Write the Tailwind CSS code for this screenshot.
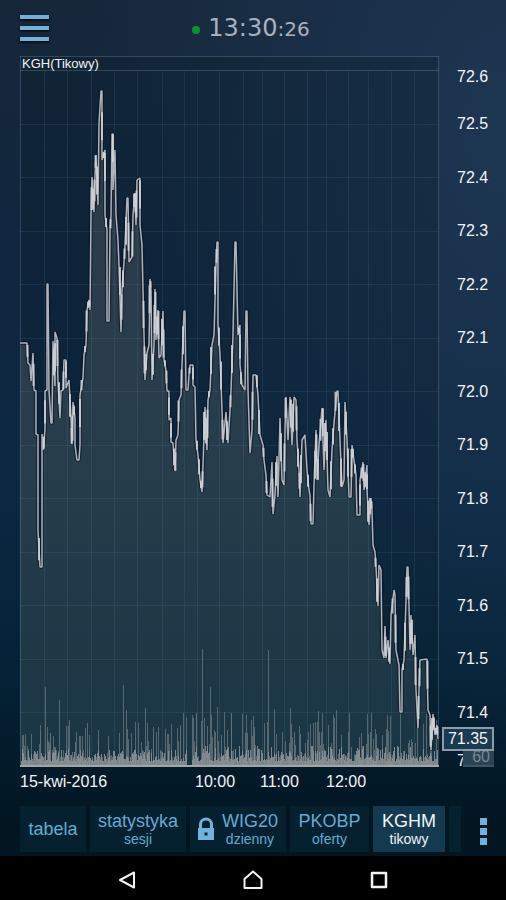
<!DOCTYPE html>
<html lang="pl">
<head>
    <meta charset="UTF-8">
    <meta name="viewport" content="width=device-width, initial-scale=1.0">
    <title>KGHM - tikowy</title>
    <script src="https://cdn.jsdelivr.net/npm/@tailwindcss/browser@4"></script>
</head>
<body class="flex min-h-screen flex-col bg-[#02192a] bg-[radial-gradient(ellipse_at_100%_15%,#1d3652_0%,transparent_60%),linear-gradient(to_bottom,#16273a_0%,#10263f_30%,#0b2843_55%,#042236_75%,#021521_92%)] font-['Liberation_Sans',Arial,sans-serif] text-gray-100">

    <!-- Header -->
    <header class="relative flex h-14 items-center justify-center">
        <button type="button" aria-label="Menu" class="absolute left-5 top-[15px] flex h-[26px] w-[29px] flex-col justify-between">
            <span class="h-1 w-full bg-[#6db3dc] shadow-sm shadow-black"></span>
            <span class="h-1 w-full bg-[#6db3dc] shadow-sm shadow-black"></span>
            <span class="h-1 w-full bg-[#6db3dc] shadow-sm shadow-black"></span>
        </button>
        <span class="mr-2 mt-1 size-2 rounded-full bg-[#07942f]"></span>
        <time class="mr-1 font-['DejaVu_Sans',sans-serif] text-2xl text-[#a9b1bf]">13:30<span class="text-xl">:26</span></time>
    </header>

    <!-- Chart -->
    <main class="flex flex-1 pl-5">
        <section class="relative min-w-0 flex-1">
            <h1 class="absolute left-[2px] top-0 z-10 text-[13px] leading-4 text-gray-100">KGH(Tikowy)</h1>
            <svg class="absolute inset-0 h-full w-full" viewBox="20 56 419 711" preserveAspectRatio="none" fill="none">
                <defs>
                    <linearGradient id="areaFill" x1="0" y1="90" x2="0" y2="767" gradientUnits="userSpaceOnUse">
                        <stop offset="0" stop-color="#2e3b4a"/>
                        <stop offset="0.55" stop-color="#273d4c"/>
                        <stop offset="1" stop-color="#193543"/>
                    </linearGradient>
                </defs>
                <rect x="20" y="56" width="419" height="711" fill="#0a1f2c" fill-opacity="0.3"/>
                <path id="area" fill="url(#areaFill)"/>
                <path id="grid" stroke="#7fa5b5" stroke-opacity="0.12"/>
                <path d="M20.500 56V767M438.500 56V767M20 56.500H439M20 70.500H439" stroke="#83a0b0" stroke-opacity="0.3"/>
                <path id="volumeBack" stroke="#66747b" stroke-opacity="0.8"/>
                <path id="volume" stroke="#8e9497" stroke-opacity="0.85"/>
                <path d="M20 766H439" stroke="#a3a5a8" stroke-width="2"/>
                <path id="lineShadow" stroke="#040c1e" stroke-opacity="0.5" stroke-width="4" stroke-linejoin="bevel"/>
                <path id="line" stroke="#b0b2ba" stroke-width="1.500" stroke-linejoin="bevel"/>
                <path id="ticks" stroke="#d2d3d7" stroke-opacity="0.85" stroke-width="2"/>
            </svg>
        </section>

        <!-- Price axis -->
        <aside class="relative w-[67px] text-base leading-5">
            <span class="absolute left-[18px] top-[11px]">72.6</span>
            <div class="flex h-full flex-col justify-between pb-11 pl-[18px] pt-[58px]">
                <span>72.5</span>
                <span>72.4</span>
                <span>72.3</span>
                <span>72.2</span>
                <span>72.1</span>
                <span>72.0</span>
                <span>71.9</span>
                <span>71.8</span>
                <span>71.7</span>
                <span>71.6</span>
                <span>71.5</span>
                <span>71.4</span>
            </div>
            <span class="absolute bottom-[-4px] left-[18px]">7</span>
            <span class="absolute bottom-0 right-3 h-4 w-[31px] border-b-2 border-[#3e5465] bg-[#2a4355] pr-1 text-right leading-[12px] text-[#78858e]">60</span>
            <output class="absolute bottom-4 left-[3px] right-3 h-6 border-2 border-[#8b9ba7] bg-[#1a3a52] pr-1 text-right">71.35</output>
        </aside>
    </main>

    <!-- Time axis -->
    <div class="mr-[67px] ml-5 grid h-[39px] grid-cols-[175fr_65fr_66fr_113fr] pt-[5px] text-base leading-5">
        <span>15-kwi-2016</span>
        <span>10:00</span>
        <span>11:00</span>
        <span>12:00</span>
    </div>

    <!-- Tabs -->
    <nav class="mb-1 flex h-[46px] gap-1 pl-5 text-lg leading-5 text-[#63abd3]">
        <button type="button" class="grow-[66] basis-0 bg-[#05202f]">tabela</button>
        <button type="button" class="flex grow-[96] basis-0 flex-col items-center justify-center bg-[#05202f]">
            <span>statystyka</span>
            <span class="text-sm leading-4">sesji</span>
        </button>
        <button type="button" class="flex grow-[96] basis-0 items-center justify-center gap-2 bg-[#05202f]">
            <svg class="h-6 w-4 shrink-0" viewBox="0 0 16 24" fill="none">
                <path d="M2.500 11V7.500a5.500 5.500 0 0 1 11 0V11" stroke="#6db3dc" stroke-width="3"/>
                <path d="M0 11h16v12H0zM6.500 15.500v3h3v-3z" fill="#6db3dc" fill-rule="evenodd"/>
            </svg>
            <span class="flex flex-col items-center">
                <span>WIG20</span>
                <span class="text-sm leading-4">dzienny</span>
            </span>
        </button>
        <button type="button" class="flex grow-[79] basis-0 flex-col items-center justify-center bg-[#05202f]">
            <span>PKOBP</span>
            <span class="text-sm leading-4">oferty</span>
        </button>
        <button type="button" aria-current="page" class="flex grow-[72] basis-0 flex-col items-center justify-center bg-[#143a52] text-gray-100">
            <span>KGHM</span>
            <span class="text-sm leading-4">tikowy</span>
        </button>
        <span class="w-3 bg-[#05202f]"></span>
        <button type="button" aria-label="Więcej" class="flex w-[41px] flex-col items-center justify-center gap-[3px] pr-1 pt-1">
            <span class="size-[7px] bg-[#6db3dc]"></span>
            <span class="size-[7px] bg-[#6db3dc]"></span>
            <span class="size-[7px] bg-[#6db3dc]"></span>
        </button>
    </nav>

    <!-- System bar -->
    <footer class="flex h-11 items-center justify-center gap-[106px] bg-black pt-1">
        <button type="button" aria-label="Wstecz">
            <svg class="size-5" viewBox="0 0 20 20" fill="none" stroke="#f3f3f3" stroke-width="2" stroke-linejoin="round"><path d="M17 2.500v15L3 10z"/></svg>
        </button>
        <button type="button" aria-label="Ekran główny">
            <svg class="size-5" viewBox="0 0 20 20" fill="none" stroke="#f3f3f3" stroke-width="2" stroke-linejoin="round"><path d="M1.500 18V9L10 1.500 18.500 9v9z"/></svg>
        </button>
        <button type="button" aria-label="Ostatnie">
            <svg class="size-5" viewBox="0 0 20 20" fill="none" stroke="#f3f3f3" stroke-width="2.500" stroke-linejoin="round"><path d="M3 3h14v14H3z"/></svg>
        </button>
    </footer>

    <script>
        const prices = [
            20,343, 27,343, 28,363, 30,365, 31,381, 33,353, 34,390, 36,391, 36,434, 38,435, 38,530, 40,567, 42,567, 42,434, 43,450, 45,430,
            45,391, 47,390, 47,284, 48,284, 49,390, 51,423, 52,423, 53,341, 55,386, 55,332, 57,338, 58,382, 60,418, 61,391, 63,390, 64,360,
            66,360, 66,388, 69,380, 71,418, 72,444, 73,402, 75,418, 75,445, 77,460, 79,460, 80,445, 80,395, 83,378, 84,355, 86,345, 87,310,
            89,300, 90,310, 91,215, 92,177, 94,212, 95,176, 96,155, 98,205, 99,123, 101,91, 102,91, 102,160, 105,150, 105,215, 107,230,
            107,321, 109,321, 110,230, 111,215, 112,134, 113,134, 113,190, 115,150, 116,215, 118,240, 119,265, 121,332, 122,290, 124,262,
            125,245, 127,198, 128,198, 129,262, 132,257, 133,215, 135,193, 136,225, 137,180, 140,178, 140,225, 142,245, 143,290, 144,335,
            145,380, 147,353, 149,345, 150,279, 151,290, 152,380, 154,345, 155,289, 156,340, 158,310, 159,358, 161,355, 163,311, 164,360,
            166,370, 167,391, 169,391, 169,420, 171,418, 171,442, 173,443, 175,471, 176,440, 178,435, 179,400, 181,395, 182,364, 184,311,
            185,311, 186,390, 188,390, 189,375, 190,365, 193,365, 193,385, 195,387, 196,440, 198,455, 200,480, 202,492, 203,465, 205,407,
            207,450, 208,400, 210,390, 212,345, 214,335, 216,265, 217,242, 218,242, 218,325, 220,355, 222,410, 223,443, 226,412, 228,443,
            230,410, 231,390, 233,335, 235,242, 236,242, 238,335, 240,325, 240,365, 242,385, 245,390, 246,311, 247,311, 248,390, 250,453,
            252,430, 253,375, 256,375, 258,395, 260,435, 263,445, 264,460, 266,475, 267,495, 270,497, 272,462, 273,514, 275,495, 277,456,
            278,497, 280,418, 282,480, 284,485, 285,430, 286,397, 288,440, 290,397, 292,445, 294,397, 296,400, 297,440, 299,470, 300,497,
            302,440, 305,435, 307,470, 309,490, 310,495, 311,524, 313,524, 314,485, 316,430, 317,480, 319,445, 322,408, 324,470, 326,420,
            328,490, 330,497, 332,450, 334,423, 337,391, 338,391, 340,440, 342,487, 344,480, 345,402, 347,440, 349,497, 351,497, 352,445,
            354,460, 356,475, 357,515, 360,515, 360,480, 363,462, 364,490, 367,465, 367,490, 369,525, 371,498, 372,510, 373,545, 375,552,
            376,567, 378,606, 379,565, 381,570, 382,650, 384,658, 385,626, 386,658, 388,640, 390,664, 391,615, 394,590, 395,595, 396,650,
            399,665, 400,712, 402,712, 402,670, 404,660, 406,600, 407,567, 408,567, 409,605, 410,650, 411,615, 413,655, 415,635, 416,690,
            418,728, 419,690, 420,660, 427,659, 428,710, 430,715, 431,750, 433,714, 435,735, 437,725, 438,739
        ];
        const peaks = [
            24,746, 31,734, 40,730, 45,687, 47,727, 50,733, 55,747, 59,700, 66,726, 82,736, 87,723, 89,735, 98,739, 119,733, 123,685, 126,710,
            128,739, 135,722, 141,742, 145,708, 153,727, 158,727, 168,734, 180,727, 183,713, 186,717, 193,718, 196,713, 202,649, 204,718,
            210,687, 217,707, 221,735, 224,712, 227,730, 231,713, 254,733, 268,650, 276,734, 282,732, 294,732, 300,734, 307,740, 322,713,
            333,715, 341,735, 349,713, 370,732, 376,734, 390,716, 400,710, 409,740, 411,739
        ];

        // small repeatable generator, keeps the bars the same on each load
        let seed = 17;
        function rnd() {
            seed = (seed * 16807) % 2147483647;
            return seed / 2147483647;
        }
        function setPath(id, d) {
            document.getElementById(id).setAttribute('d', d);
        }

        let line = `M${prices[0]} ${prices[1]}`;
        let ticks = '';
        for (let i = 2; i < prices.length; i += 2) {
            const x = prices[i];
            const y = prices[i + 1];
            const prevX = prices[i - 2];
            const prevY = prices[i - 1];
            line += `L${x} ${y}`;
            const jump = Math.abs(y - prevY);
            if (jump > 8 && jump < 75 && rnd() < 0.75) {
                const start = Math.min(prevY, y) + rnd() * jump * 0.4;
                const mid = (x + prevX) / 2;
                ticks += `M${mid} ${start}V${start + Math.min(jump * 0.6, 28)}`;
            }
        }
        setPath('line', line);
        setPath('lineShadow', line);
        setPath('ticks', ticks);
        setPath('area', line + 'V767H20Z');

        // grid
        let grid = '';
        for (const x of [44, 67, 91, 114, 137, 162, 184, 197, 219, 243, 262, 284, 307, 326, 348, 368, 391, 414]) {
            grid += `M${x + 0.5} 71V767`;
        }
        for (const y of [124, 177, 231, 284, 338, 391, 445, 498, 552, 605, 659, 712]) {
            grid += `M20 ${y + 0.5}H439`;
        }
        setPath('grid', grid);

        // volume
        let volume = '';
        let volumeBack = '';
        for (let x = 21; x < 438; x++) {
            if (x > 186 && x < 192) continue;
            const busy = x > 190 ? 1.3 : 1;
            volume += `M${x + 0.5} 767V${Math.round(761 - Math.pow(rnd(), 2) * 12 * busy)}`;
            if (rnd() < 0.6) {
                volumeBack += `M${x + 0.5} 767V${Math.round(757 - Math.pow(rnd(), 3) * 38 * busy)}`;
            }
        }
        for (let i = 0; i < peaks.length; i += 2) {
            volumeBack += `M${peaks[i] + 0.5} 767V${peaks[i + 1]}`;
        }
        setPath('volume', volume);
        setPath('volumeBack', volumeBack);
    </script>
</body>
</html>
